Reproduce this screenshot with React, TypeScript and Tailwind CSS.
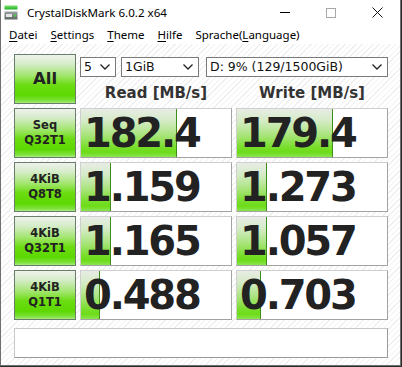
import React from "react";

const rows = [
  { l1: "Seq", l2: "Q32T1", r: "182.4", w: "179.4", rb: 96, wb: 96 },
  { l1: "4KiB", l2: "Q8T8", r: "1.159", w: "1.273", rb: 30, wb: 30 },
  { l1: "4KiB", l2: "Q32T1", r: "1.165", w: "1.057", rb: 30, wb: 30 },
  { l1: "4KiB", l2: "Q1T1", r: "0.488", w: "0.703", rb: 19, wb: 24 },
];

const btn =
  "flex flex-col items-center justify-center border border-[#6a7d6a] bg-[linear-gradient(to_bottom,#eef2ec_0%,#d6ecca_18%,#a4e672_42%,#6cdc12_62%,#5cd800_84%,#7ee23c_95%,#a6ec80_100%)] text-[#222] font-bold font-['DejaVu_Sans',sans-serif]";

function Chevron() {
  return (
    <svg width="10" height="6" viewBox="0 0 10 6" className="shrink-0">
      <path d="M0.5 0.5 L5 5 L9.5 0.5" fill="none" stroke="#222" strokeWidth="1.3" />
    </svg>
  );
}

function Select({ w, text }: { w: string; text: string }) {
  return (
    <div
      className={`${w} h-[20px] border border-[#7a7a7a] bg-white flex items-center justify-between pl-[3px] pr-[5px] text-[12.5px] text-[#111] font-['DejaVu_Sans',sans-serif] leading-none`}
    >
      <span>{text}</span>
      <Chevron />
    </div>
  );
}

function Result({ value, bar }: { value: string; bar: number }) {
  return (
    <div className="relative h-[50px] bg-white border border-[#cfcfcf] border-b-[#a3a3a3] border-r-[#a3a3a3] overflow-hidden">
      <div
        className="absolute left-0 top-0 bottom-0 border-r border-[#3f8e1c] bg-[linear-gradient(to_bottom,#e8ece6_0%,#d4ebc6_25%,#a8e47a_55%,#78de2a_80%,#6cdc18_90%,#8ce450_100%)]"
        style={{ width: bar }}
      />
      <div className="relative h-full flex items-center pl-[3px] text-[40px] tracking-[-2.2px] font-bold text-[#222] font-['DejaVu_Sans',sans-serif] leading-none">
        {value}
      </div>
    </div>
  );
}

function U({ c }: { c: string }) {
  return <span className="underline underline-offset-[2px]">{c}</span>;
}

export default function App() {
  return (
    <div className="w-[402px] h-[367px] bg-[#2b2b2b] overflow-hidden">
      <div className="w-[401px] h-[366px] bg-white flex flex-col border-x border-b border-[#6f6f6f]">
        {/* title bar */}
        <div className="h-[25px] flex items-center bg-white shrink-0">
          <svg width="14" height="15" viewBox="0 0 14 15" className="ml-[3px] mr-[9px]">
            <defs>
              <linearGradient id="g1" x1="0" y1="0" x2="0" y2="1">
                <stop offset="0" stopColor="#7be36a" />
                <stop offset="1" stopColor="#1fae2a" />
              </linearGradient>
              <linearGradient id="g2" x1="0" y1="0" x2="0" y2="1">
                <stop offset="0" stopColor="#9aa3a0" />
                <stop offset="1" stopColor="#5d6663" />
              </linearGradient>
            </defs>
            <rect x="0.5" y="0.5" width="13" height="4" fill="url(#g1)" />
            <rect x="0.5" y="6.5" width="13" height="8" fill="url(#g2)" />
            <rect x="2" y="9" width="6" height="3" fill="#e6e6e6" />
            <rect x="10" y="9.5" width="2" height="2" fill="#4ad04a" />
          </svg>
          <span className="text-[11.6px] text-black font-['Noto_Sans',sans-serif]">CrystalDiskMark 6.0.2 x64</span>
          <div className="ml-auto flex items-center h-full">
            <div className="w-[46px] h-full flex items-center justify-center">
              <div className="w-[10px] h-px bg-black" />
            </div>
            <div className="w-[46px] h-full flex items-center justify-center">
              <div className="w-[10px] h-[10px] border border-[#a8a8a8]" />
            </div>
            <div className="w-[46px] h-full flex items-center justify-center">
              <svg width="11" height="11" viewBox="0 0 11 11">
                <path d="M0.5 0.5 L10.5 10.5 M10.5 0.5 L0.5 10.5" stroke="#111" strokeWidth="1" />
              </svg>
            </div>
          </div>
        </div>
        {/* menu bar */}
        <div className="h-[19px] flex items-center gap-[13px] pl-[8px] text-[11.5px] text-black font-['Noto_Sans',sans-serif] shrink-0 leading-none">
          <span><U c="D" />atei</span>
          <span><U c="S" />ettings</span>
          <span><U c="T" />heme</span>
          <span><U c="H" />ilfe</span>
          <span>Sprache(<U c="L" />anguage)</span>
        </div>
        {/* client */}
        <div className="flex-1 bg-[repeating-linear-gradient(135deg,#ffffff_0px,#ffffff_3px,#efefef_3px,#efefef_4px)] pt-[10px] pl-[13px] pr-[12px]">
          <div className="grid grid-cols-[62px_152px_152px] gap-x-[4px] gap-y-[4px] auto-rows-[50px]">
            <div className={`${btn} text-[16.5px]`}>All</div>
            <div className="col-span-2 flex flex-col">
              <div className="flex items-center mt-[3px]">
                <Select w="w-[36px]" text="5" />
                <div className="w-[5px]" />
                <Select w="w-[78px]" text="1GiB" />
                <div className="w-[7px]" />
                <Select w="w-[182px]" text="D: 9% (129/1500GiB)" />
              </div>
              <div className="flex mt-[9px] text-[15px] font-bold text-[#333] font-['DejaVu_Sans',sans-serif] leading-none">
                <div className="w-[152px] text-center">Read [MB/s]</div>
                <div className="w-[4px]" />
                <div className="w-[152px] text-center">Write [MB/s]</div>
              </div>
            </div>
            {rows.map((r, i) => (
              <React.Fragment key={i}>
                <div className={`${btn} text-[11.5px] leading-[15px]`}>
                  <span>{r.l1}</span>
                  <span>{r.l2}</span>
                </div>
                <Result value={r.r} bar={r.rb} />
                <Result value={r.w} bar={r.wb} />
              </React.Fragment>
            ))}
          </div>
          <div className="mt-[8px] w-[374px] h-[30px] bg-white border border-[#c8c8c8] border-b-[#9a9a9a] border-r-[#9a9a9a]" />
        </div>
      </div>
    </div>
  );
}
